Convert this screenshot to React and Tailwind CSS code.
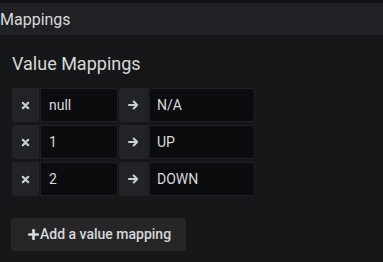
import React from "react";

const Times = () => (
  <svg width="9" height="9" viewBox="0 0 10 10" className="text-[#c7d0d9]">
    <path d="M2 2 L8 8 M8 2 L2 8" stroke="currentColor" strokeWidth="2.4" strokeLinecap="round" />
  </svg>
);

const Arrow = () => (
  <svg width="11" height="10" viewBox="0 0 12 10" className="text-[#c7d0d9]">
    <path d="M1 5 H10 M6.2 1.2 L10 5 L6.2 8.8" stroke="currentColor" strokeWidth="2.2" fill="none" strokeLinecap="round" strokeLinejoin="round" />
  </svg>
);

const Plus = () => (
  <svg width="11" height="11" viewBox="0 0 10 10" className="text-[#d8d9da]">
    <path d="M5 1 V9 M1 5 H9" stroke="currentColor" strokeWidth="2.4" strokeLinecap="round" />
  </svg>
);

const rows = [
  ["null", "N/A"],
  ["1", "UP"],
  ["2", "DOWN"],
];

export default function App() {
  return (
    <div className="w-[383px] h-[262px] bg-[#161719] text-[#d8d9da] overflow-hidden" style={{ fontFamily: "Roboto, 'Noto Sans', sans-serif" }}>
      <div className="h-[3px] bg-[#0f1012]" />
      <div className="h-[32px] bg-[#202124] flex items-center text-[16px] pt-[2px]">Mappings</div>
      <div className="pl-3 pt-[17px]">
        <div className="text-[18px] leading-[24px]">Value Mappings</div>
        <div className="mt-[12px] flex flex-col gap-[3px]">
          {rows.map(([a, b]) => (
            <div key={a} className="flex h-[34px] gap-px">
              <div className="w-[27px] bg-[#222326] rounded-l-[3px] flex items-center justify-center">
                <Times />
              </div>
              <div className="w-[78px] bg-[#0b0c0e] border border-[#202124] rounded-r-[3px] flex items-center pl-2 text-[14px]">{a}</div>
              <div className="w-[29px] bg-[#222326] rounded-l-[3px] flex items-center justify-center">
                <Arrow />
              </div>
              <div className="w-[106px] bg-[#0b0c0e] border border-[#202124] rounded-r-[3px] flex items-center pl-[7px] text-[14px]">{b}</div>
            </div>
          ))}
        </div>
        <button className="mt-[22px] -ml-px w-[175px] h-[33px] bg-[#262628] rounded-[3px] flex items-center pl-[17px] gap-px text-[14px] font-medium text-[#d8d9da]">
          <Plus />
          <span>Add a value mapping</span>
        </button>
      </div>
    </div>
  );
}
